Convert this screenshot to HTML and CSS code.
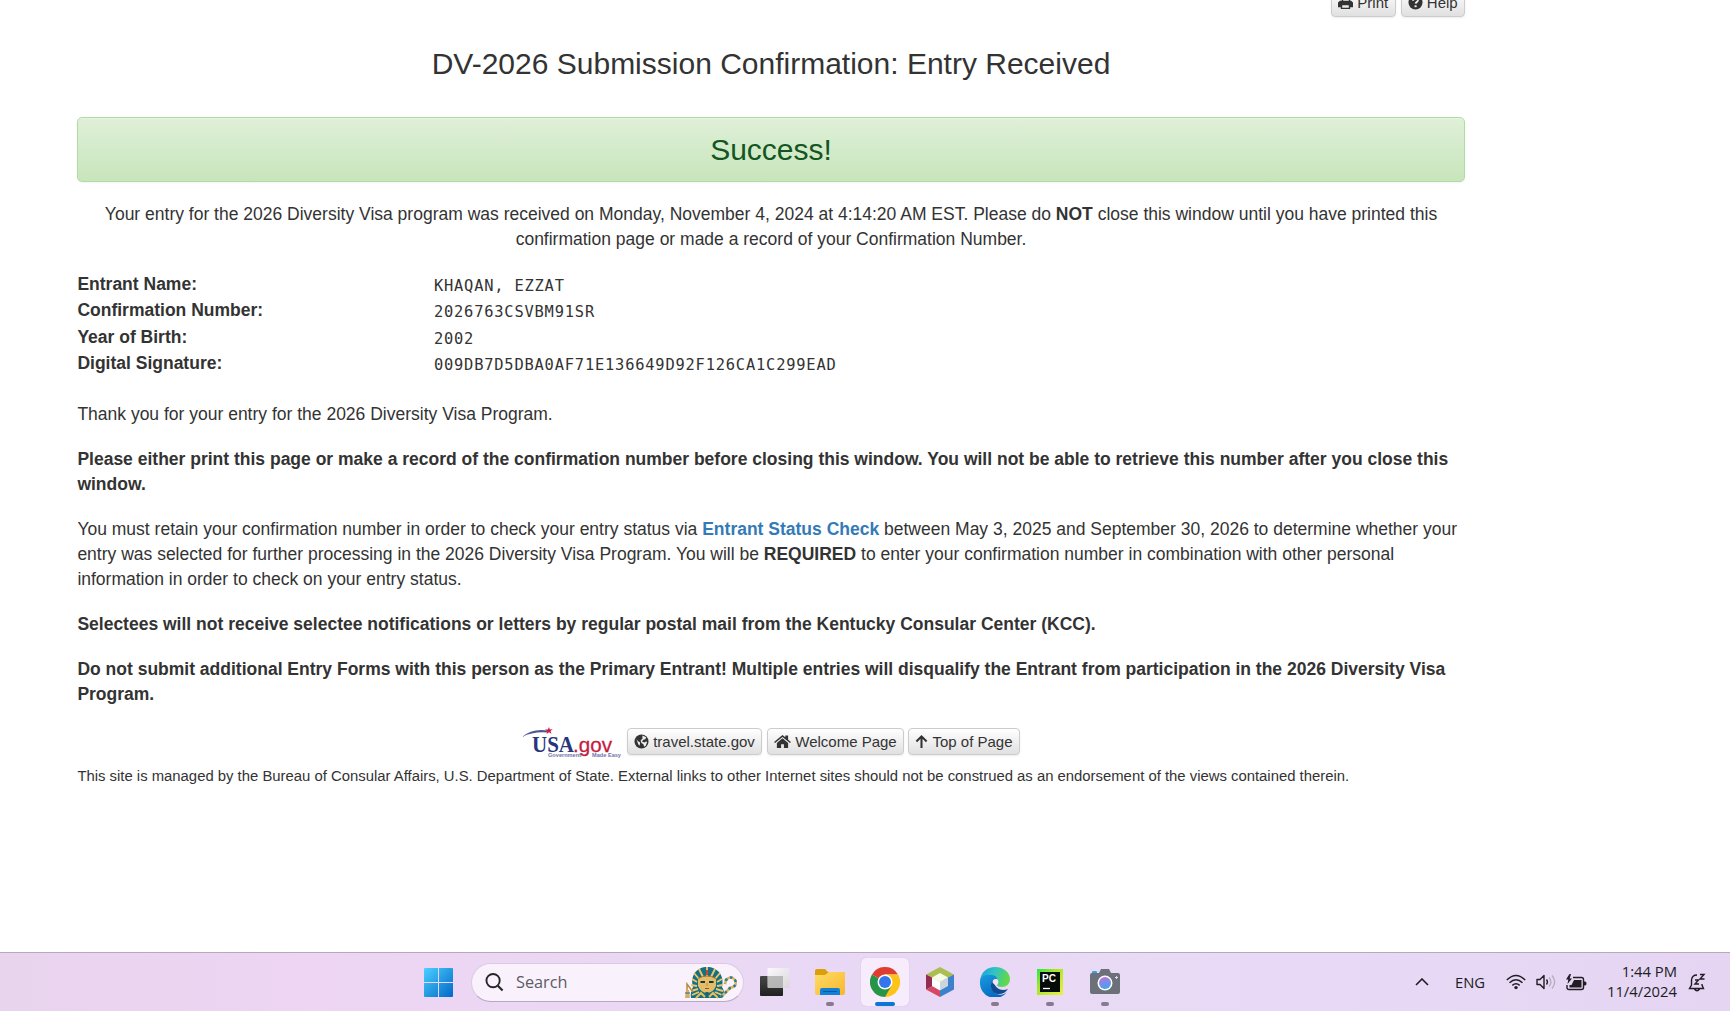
FILE: index.html
```html
<!DOCTYPE html>
<html lang="en">
<head>
<meta charset="utf-8">
<title>DV-2026 Submission Confirmation</title>
<link rel="stylesheet" href="styles.css">
</head>
<body>
<main class="page">
  <div class="tools">
    <a class="btn"><svg class="icon" viewBox="0 0 16 16"><path d="M4 1h7l2 2v3H4V1zm1.500 1.500V6h6V4H10V2.500zM2 6h12l2 2v5h-3v2H3v-2H0V8zm2.500 5v2.500h7V11z" fill-rule="evenodd"/></svg>Print</a>
    <a class="btn"><svg class="icon" viewBox="0 0 16 16"><circle cx="8" cy="8" r="7.500"/><path d="M5.500 6c0-3.500 5.500-3 5 0-.3 1.500-2.200 1.500-2.300 3.200" fill="none" stroke="#f0f0f0" stroke-width="2"/><rect x="7" y="11" width="2.200" height="2" fill="#f0f0f0"/></svg>Help</a>
  </div>
  <h1 class="title">DV-2026 Submission Confirmation: Entry Received</h1>
  <div class="alert">Success!</div>
  <p class="lead">Your entry for the 2026 Diversity Visa program was received on Monday, November 4, 2024 at 4:14:20 AM EST. Please do <b>NOT</b> close this window until you have printed this<br>confirmation page or made a record of your Confirmation Number.</p>
  <dl class="details">
    <dt>Entrant Name:</dt><dd>KHAQAN, EZZAT</dd>
    <dt>Confirmation Number:</dt><dd>2026763CSVBM91SR</dd>
    <dt>Year of Birth:</dt><dd>2002</dd>
    <dt>Digital Signature:</dt><dd>009DB7D5DBA0AF71E136649D92F126CA1C299EAD</dd>
  </dl>
  <div class="copy">
    <p>Thank you for your entry for the 2026 Diversity Visa Program.</p>
    <p><b>Please either print this page or make a record of the confirmation number before closing this window. You will not be able to retrieve this number after you close this<br>window.</b></p>
    <p>You must retain your confirmation number in order to check your entry status via <a class="link">Entrant Status Check</a> between May 3, 2025 and September 30, 2026 to determine whether your<br>entry was selected for further processing in the 2026 Diversity Visa Program. You will be <b>REQUIRED</b> to enter your confirmation number in combination with other personal<br>information in order to check on your entry status.</p>
    <p><b>Selectees will not receive selectee notifications or letters by regular postal mail from the Kentucky Consular Center (KCC).</b></p>
    <p><b>Do not submit additional Entry Forms with this person as the Primary Entrant! Multiple entries will disqualify the Entrant from participation in the 2026 Diversity Visa<br>Program.</b></p>
  </div>
  <div class="links">
    <svg class="usa" viewBox="0 0 100 32">
      <path d="M0 10Q10 1 26 3.500L25 5.500Q11 4.500 0 10z" fill="#4b5796"/>
      <path d="M27 0l.8 2.500 3-.3-2.300 1.900 1 2.700-2.500-1.500L24.600 7l.8-2.800-2.500-1.700 3-.1z" fill="#d0173c"/>
      <text x="10" y="25" textLength="42" lengthAdjust="spacingAndGlyphs" class="usa-name">USA</text>
      <text x="51" y="25" textLength="39" lengthAdjust="spacingAndGlyphs" class="usa-gov">.gov</text>
      <text x="26" y="30" textLength="33" lengthAdjust="spacingAndGlyphs" class="usa-tag">Government</text>
      <text x="70" y="30" textLength="29" lengthAdjust="spacingAndGlyphs" class="usa-tag">Made Easy</text>
    </svg>
    <a class="btn btn-travel"><svg class="icon" viewBox="0 0 16 16"><circle cx="8" cy="8" r="7.500"/><path d="M9 1.500l4 2-1 2-2 .5-1.500 2L11 9l2-1 1 .5-1.500 4-1.500 1-1-2.500L8 9.500 7 7l2-2zM2.500 5L4 7.500 6.500 9 6 12.500 4.500 11z" fill="#eee"/></svg>travel.state.gov</a>
    <a class="btn btn-home"><svg class="icon icon-home" viewBox="0 0 18 16"><path d="M0 8.500L9 1l3 2.500V1.500h3V6l3 2.500-1 1.200L9 3.200 1 9.700z"/><path d="M9 4.500l6 5V15h-4.500v-4h-3v4H3V9.500z"/></svg>Welcome Page</a>
    <a class="btn btn-top"><svg class="icon icon-up" viewBox="0 0 14 16"><path d="M7 15V3M1.500 8L7 2.500 12.500 8" fill="none" stroke="#333" stroke-width="2.200"/></svg>Top of Page</a>
  </div>
  <p class="notice">This site is managed by the Bureau of Consular Affairs, U.S. Department of State. External links to other Internet sites should not be construed as an endorsement of the views contained therein.</p>
</main>
<footer class="taskbar">
  <div class="apps">
    <svg class="start" viewBox="0 0 29 29"><defs><linearGradient id="win" gradientUnits="userSpaceOnUse" x1="0" y1="0" x2="29" y2="29"><stop stop-color="#4cd0ff"/><stop offset="1" stop-color="#0067c8"/></linearGradient></defs><path fill="url(#win)" d="M0 1q0-1 1-1h13v14H0zM15 0h13q1 0 1 1v13H15zM0 15h14v14H1q-1 0-1-1zM15 15h14v13q0 1-1 1H15z"/></svg>
    <div class="search">
      <svg class="lens" viewBox="0 0 20 20"><circle cx="8.500" cy="8" r="7" fill="none" stroke="#272529" stroke-width="2"/><path d="M13.500 13.500l5 5" stroke="#272529" stroke-width="2.300"/></svg>
      <span>Search</span>
      <svg class="pharaoh" viewBox="0 0 52 33">
        <path d="M6 32Q5 26 8 21C5 9 12 1 22 1s18 8 15 20q4 6 0 11z" fill="#157083"/>
        <g stroke="#edc66b" stroke-width="1.900" fill="none"><path d="M22 11V1M18 11L14 3M26 11l4-8M14 13L9 7M30 13l5-6M12 16l-5-3M32 16l5-3M12 20l-6-1M32 20l6-1M13 23l-7 2M31 23l7 2M14 26l-7 3M30 26l7 3"/></g>
        <path d="M13 13q9-6 18 0v7q-3 7-9 7t-9-7z" fill="#e4bd68"/><path d="M13 12.500q9-5 18 0" stroke="#a87a28" fill="none"/>
        <path d="M15.500 16h4.500M24 16h4.500" stroke="#163741" stroke-width="1.800"/><path d="M22 17v3" stroke="#c08c3c"/><path d="M20 22.500h4" stroke="#965628"/><path d="M20.500 26h3v6h-3z" fill="#1a6774"/><path d="M21 4h2v5h-2z" fill="#c34b35"/>
        <path d="M11 32l5-5 4 4M33 32l-5-5-4 4" fill="none" stroke="#e8be58" stroke-width="2"/>
        <path d="M36 31l9-9q8-2 5-8-4-5-9 0l-1 4" fill="none" stroke="#e0b35c" stroke-width="2.600"/><path d="M36 31l9-9q8-2 5-8-4-5-9 0l-1 4" fill="none" stroke="#297f91" stroke-width="2.600" stroke-dasharray="2.500 3"/>
        <path d="M8 26L2 18v8" fill="none" stroke="#bb883c" stroke-width="1.500"/><path d="M1 24h3l1 8H0z" fill="#d5ad6b"/><path d="M0 27h5" stroke="#28717e"/>
      </svg>
    </div>
    <div class="app"><svg viewBox="0 0 30 30"><defs><linearGradient id="dk" x2="0" y2="1"><stop stop-color="#474747"/><stop offset="1" stop-color="#202020"/></linearGradient><linearGradient id="lt" x2="1" y2="1"><stop stop-color="#fff"/><stop offset="1" stop-color="#d6d6d6"/></linearGradient></defs><rect y="9" width="23" height="20" rx="1" fill="url(#dk)"/><rect x="7.500" y="1" width="22" height="20" rx="1" fill="url(#lt)" opacity=".85"/><path d="M8 9h15v12H8z" fill="#aaa" opacity=".65"/></svg></div>
    <div class="app running"><svg viewBox="0 0 30 30"><defs><linearGradient id="fold" x2="1" y2="1"><stop stop-color="#ffdc68"/><stop offset="1" stop-color="#f8b62c"/></linearGradient></defs><path d="M0 4q0-2 2-2h8l3 3h15q2 0 2 2v5H0z" fill="#daa00b"/><path d="M0 8h10l4-3h16v21q0 2-2 2H2q-2 0-2-2z" fill="url(#fold)"/><path d="M5 28v-5q0-2 2-2h16q2 0 2 2v5z" fill="#1281d5"/><path d="M8 24.500h14" stroke="#0758a3"/></svg></div>
    <div class="app running active"><svg viewBox="0 0 30 30"><path d="M15 15L2 7.500A15 15 0 0 1 28 7.500H15z" fill="#df3d32"/><path d="M15 15V7.500h13A15 15 0 0 1 15 30z" fill="#fdc316"/><path d="M15 15l6.500 3.750L15 30A15 15 0 0 1 2 7.500z" fill="#279447"/><circle cx="15" cy="15" r="7.500" fill="#fff"/><circle cx="15" cy="15" r="6" fill="#3475eb"/></svg></div>
    <div class="app"><svg viewBox="0 0 30 30"><path d="M15 0l14 7.500-14 7.500L1 7.500z" fill="#aabf50"/><path d="M1 7.500v15l7-3.500v-8z" fill="#962b50"/><path d="M1 22.500L15 30v-8l-7-3z" fill="#d64864"/><path d="M29 7.500v15L15 30v-8l7-3v-8z" fill="#3d80cc"/><path d="M15 6l8 4.500L15 15l-8-4.500z" fill="#f9fbe9"/><path d="M7 10.500l8 4.500v8.500L7 19z" fill="#fff"/><path d="M23 10.500L15 15v8.500l8-4.500z" fill="#cbd5dd"/></svg></div>
    <div class="app running"><svg viewBox="0 0 30 30"><defs><linearGradient id="eg" x1="0" y1="0" x2="1" y2=".3"><stop stop-color="#179ed8"/><stop offset=".5" stop-color="#2fc2c7"/><stop offset="1" stop-color="#62d84a"/></linearGradient><linearGradient id="eb" x2=".6" y2="1"><stop stop-color="#189ce0"/><stop offset="1" stop-color="#0666be"/></linearGradient></defs><path d="M0 14C1 5 7 0 15 0c9 0 15 6 15 12 0 5-4 8-8 8-3 0-5-1-5-2 3-4 0-8-6-8C5 10 1 12 0 14z" fill="url(#eg)"/><path d="M0 15c0-5 5-8 10-7 5 0 7 2 7 4-6 1-8 8-3 13 4 4 10 3 13 0A15 15 0 0 1 0 15z" fill="url(#eb)"/><path d="M14 12c-5 4-4 15 5 15 4 0 7-2 9-5-7 3-15-1-14-10z" fill="#124a92"/><path d="M15 12c4 0 4 4 2 6-5 0-6-5-2-6z" fill="#eee3fa"/></svg></div>
    <div class="app running"><svg viewBox="0 0 30 30"><defs><linearGradient id="pcg" x2="1" y2="1"><stop stop-color="#22e848"/><stop offset=".35" stop-color="#a0e529"/><stop offset="1" stop-color="#f0ef42"/></linearGradient></defs><path d="M2 2h26v26H2z" fill="url(#pcg)"/><path d="M5 5h20v20H5z" fill="#050b07"/><text x="7" y="14.500" class="pc">PC</text><path d="M8 21.500h7" stroke="#fff" stroke-width="1.300"/></svg></div>
    <div class="app running"><svg viewBox="0 0 30 30"><defs><linearGradient id="cam" x1=".3" y1="0" x2=".6" y2="1"><stop stop-color="#bf70df"/><stop offset="1" stop-color="#38a9ed"/></linearGradient></defs><path d="M2 7V5q0-1 1-1h3q1 0 1 1v2z" fill="#30a4e4"/><path d="M0 8q0-2 2-2h7l2-4h8l2 4h7q2 0 2 2v17q0 2-2 2H2q-2 0-2-2z" fill="#6c7179"/><circle cx="15" cy="16" r="7.500" fill="#fff"/><circle cx="15" cy="16" r="6" fill="url(#cam)"/><path d="M26.500 9v3M25 10.500h3" stroke="#dcdce2"/></svg></div>
  </div>
  <div class="tray">
    <svg class="chev" viewBox="0 0 14 8"><path d="M1 7l6-6 6 6" fill="none" stroke="#201d24" stroke-width="1.600"/></svg>
    <span class="lang">ENG</span>
    <svg class="wifi" viewBox="0 0 20 16"><g fill="none" stroke="#201d24" stroke-width="1.500"><path d="M.8 6q9.200-9 18.400 0M3.500 8.800q6.500-6 13 0M6.300 11.400q3.700-3.300 7.400 0"/></g><circle cx="10" cy="13.600" r="1.700" fill="#201d24"/></svg>
    <svg class="sound" viewBox="0 0 20 16"><path d="M1 5.500h3L8 1.500v13L4 10.500H1z" fill="none" stroke="#201d24" stroke-width="1.400" stroke-linejoin="round"/><path d="M10.500 5.500q2 2.500 0 5" fill="none" stroke="#201d24" stroke-width="1.300"/><path d="M13 3.500q4 4.500 0 9M16 1.500q5.500 6.500 0 13" fill="none" stroke="#b3a8bc" stroke-width="1.200"/></svg>
    <svg class="battery" viewBox="0 0 21 17"><path d="M7 3.500h8.500q2 0 2 2v8q0 2-2 2H3q-2 0-2-2V11" fill="none" stroke="#201d24" stroke-width="1.400"/><path d="M8 6h7.500v7.500H3.500V11h2z" fill="#201d24"/><path d="M18 7.500h1q1.500 0 1.500 2t-1.500 2h-1zM3.500 0L0 5.500h2.300L1.500 10 6 4.500H3.700L5 0z" fill="#201d24"/></svg>
    <div class="clock"><span>1:44 PM</span><span>11/4/2024</span></div>
    <svg class="bell" viewBox="0 0 18 19"><path d="M9 2Q4 2 3.500 7v5L1.500 15.500h14L14 12v-1M6.500 16q2.500 3.500 5 0" fill="none" stroke="#201d24" stroke-width="1.400"/><path d="M7 7h3.500L7 11h4M12 1.500h4l-4 4.500h4.500" fill="none" stroke="#201d24" stroke-width="1.400"/></svg>
  </div>
</footer>
</body>
</html>
```
FILE: styles.css
```css
* { box-sizing: border-box; }
body {
  margin: 0;
  width: 1730px;
  height: 1011px;
  overflow: hidden;
  display: flex;
  flex-direction: column;
  background: #fff;
  color: #333;
  font: 17.5px/25px "Liberation Sans", Arial, sans-serif;
}
p, h1, dl, dd { margin: 0; }
.page { width: 1388px; height: 952px; margin-left: 77px; flex: none; }
.tools { display: flex; justify-content: flex-end; gap: 5px; height: 17px; align-items: flex-end; }
.btn {
  display: flex;
  align-items: center;
  justify-content: center;
  gap: 4px;
  flex: none;
  height: 27px;
  padding: 0 6px;
  border: 1px solid #ccc;
  border-radius: 4px;
  background: linear-gradient(#fff, #e0e0e0);
  box-shadow: 0 1px 2px rgba(0, 0, 0, .08);
  font-size: 15px;
  white-space: nowrap;
}
.tools .btn { width: 64.5px; height: 28px; padding-bottom: 2px; }
.icon { width: 15px; height: 15px; fill: #333; flex: none; }
.icon-home { width: 17px; }
.icon-up { width: 13px; }
.title { margin-top: 30px; font-size: 30px; line-height: 33px; font-weight: 400; text-align: center; }
.alert {
  height: 65px;
  margin-top: 37px;
  border: 1px solid #b2dba1;
  border-radius: 5px;
  background: linear-gradient(#dff0d8, #c8e5bc);
  box-shadow: inset 0 1px 0 rgba(255, 255, 255, .25), 0 1px 2px rgba(0, 0, 0, .05);
  color: #14561f;
  font-size: 30px;
  line-height: 63px;
  text-align: center;
}
.lead { margin-top: 20px; text-align: center; white-space: nowrap; }
.details {
  display: grid;
  grid-template-columns: 356.500px 1fr;
  grid-auto-rows: 26.300px;
  margin-top: 20px;
  padding-left: .4px;
}
.details dt { font-weight: 700; }
.details dd { padding-top: 2px; font-family: "DejaVu Sans Mono", monospace; font-size: 15.400px; letter-spacing: .8px; }
.copy { display: flex; flex-direction: column; gap: 20px; margin-top: 25px; padding-left: .4px; white-space: nowrap; }
.link { color: #337ab7; font-weight: 700; }
.links { display: flex; justify-content: center; gap: 5px; margin-top: 21px; height: 30px; }
.usa { width: 100px; height: 32px; margin-top: -1px; flex: none; }
.usa-name { font: 700 24px "Liberation Serif", serif; fill: #27357c; }
.usa-gov { font: 21px "Liberation Sans", sans-serif; fill: #c51b43; stroke: #c51b43; stroke-width: .3; }
.usa-tag { font: 700 5px "Liberation Sans", sans-serif; fill: #6e75ac; }
.btn-travel { width: 135px; }
.btn-home { width: 137px; }
.btn-top { width: 112px; margin-left: -1px; }
.notice { margin-top: 6px; padding-left: .4px; font-size: 14.875px; line-height: 25px; white-space: nowrap; }
.taskbar {
  flex: none;
  height: 59px;
  display: flex;
  justify-content: space-between;
  border-top: 1px solid #b5aaba;
  background: linear-gradient(90deg, #e9d4ee, #edd5f3 18%, #ead8f5 40%, #e8daf6 75%, #e5d5f2);
  font-family: "Open Sans", "Noto Sans", sans-serif;
  color: #201d24;
}
.apps { display: flex; align-items: center; padding-left: 424px; }
.start { width: 29px; height: 29px; margin-right: 18px; }
.search {
  display: flex;
  align-items: center;
  width: 273px;
  height: 39px;
  margin-right: 3px;
  padding: 0 6px 0 13px;
  border: 1px solid #dccae3;
  border-bottom-color: #b9a8c2;
  border-radius: 20px;
  background: #f9f2fc;
  color: #605a64;
  font-size: 16.300px;
}
.lens { width: 19px; height: 19px; margin-right: 12px; }
.pharaoh { width: 52px; height: 33px; margin-left: auto; }
.app {
  position: relative;
  width: 48px;
  height: 48px;
  margin: 0 3.500px;
  display: flex;
  align-items: center;
  justify-content: center;
  border-radius: 5px;
}
.app svg { width: 30px; height: 30px; }
.active { background: #f6ecfb; box-shadow: 0 0 1px #bba9c6; }
.running::after {
  content: "";
  position: absolute;
  bottom: 0;
  left: 20px;
  width: 8px;
  height: 4px;
  border-radius: 2px;
  background: #87798f;
}
.active::after { left: 14px; width: 20px; background: #0878d4; }
.pc { font: 700 10px "Liberation Sans", sans-serif; fill: #fff; }
.tray { display: flex; align-items: center; padding-right: 24px; font-size: 14.800px; }
.chev { width: 14px; height: 8px; margin-right: 26px; }
.lang { width: 29px; margin-right: 22px; }
.wifi { width: 20px; height: 16px; margin-right: 10px; }
.sound { width: 20px; height: 16px; margin-right: 10px; }
.battery { width: 21px; height: 17px; margin-right: 18px; }
.clock { display: flex; flex-direction: column; align-items: flex-end; width: 72px; margin-right: 11px; padding-bottom: 2px; line-height: 20px; }
.bell { width: 18px; height: 19px; }
```
